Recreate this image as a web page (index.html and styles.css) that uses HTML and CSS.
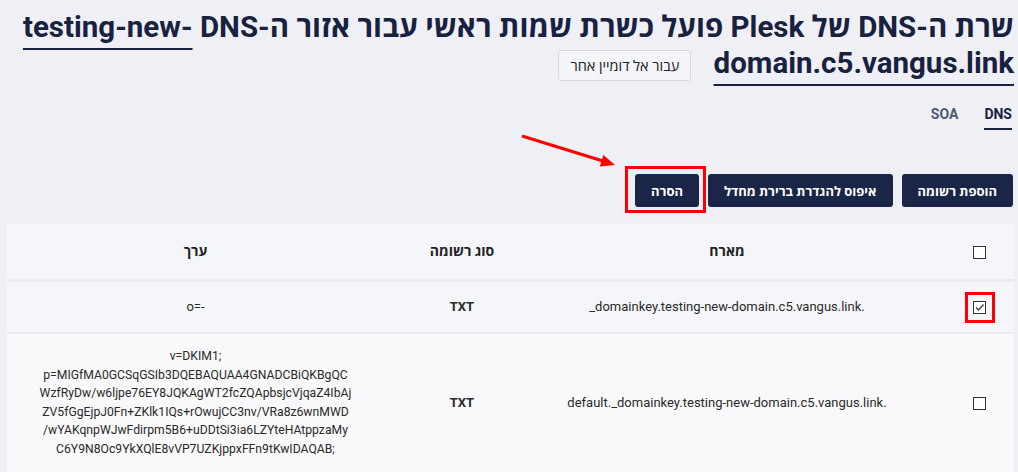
FILE: index.html
```
<!DOCTYPE html>
<html lang="he" dir="rtl">
<head>
    <meta charset="UTF-8">
    <meta name="viewport" content="width=device-width, initial-scale=1.0">
    <title>DNS - testing-new-domain.c5.vangus.link</title>
    <link rel="stylesheet" href="styles.css">
</head>
<body>
<div class="page">
    <h1 class="title">
        שרת ה-DNS של Plesk פועל כשרת שמות ראשי עבור אזור ה-DNS
        <a class="zone-link" href="#" dir="ltr">testing-new-domain.c5.vangus.link</a>
        <button class="btn-light">עבור אל דומיין אחר</button>
    </h1>

    <ul class="tabs">
        <li><a class="tab active" href="#">DNS</a></li>
        <li><a class="tab" href="#">SOA</a></li>
    </ul>

    <div class="toolbar">
        <button class="btn">הוספת רשומה</button>
        <button class="btn">איפוס להגדרת ברירת מחדל</button>
        <span class="marked"><button class="btn">הסרה</button></span>
    </div>

    <!-- annotation arrow -->
    <svg class="arrow" width="110" height="45" viewBox="0 0 110 45">
        <line x1="7" y1="6" x2="88" y2="31" stroke="#f00" stroke-width="3"/>
        <polygon points="100,35 84.8,36.5 88.4,25.1" fill="#f00"/>
    </svg>

    <table class="records">
        <colgroup>
            <col style="width:70px">
            <col style="width:434px">
            <col style="width:96px">
            <col>
        </colgroup>
        <thead>
            <tr>
                <th><span class="check"></span></th>
                <th>מארח</th>
                <th>סוג רשומה</th>
                <th class="value-col">ערך</th>
            </tr>
        </thead>
        <tbody>
            <tr class="row-a">
                <td>
                    <span class="marked small">
                        <span class="check">
                            <svg width="11" height="11" viewBox="0 0 11 11"><path d="M2 5.5 L4.5 8 L9.5 2.5" fill="none" stroke="#444" stroke-width="1.4"/></svg>
                        </span>
                    </span>
                </td>
                <td class="ltr">_domainkey.testing-new-domain.c5.vangus.link.</td>
                <td class="type">TXT</td>
                <td class="ltr value-col">o=-</td>
            </tr>
            <tr class="row-b">
                <td><span class="check"></span></td>
                <td class="ltr">default._domainkey.testing-new-domain.c5.vangus.link.</td>
                <td class="type">TXT</td>
                <td class="ltr value-col dkim">v=DKIM1;<br>p=MIGfMA0GCSqGSIb3DQEBAQUAA4GNADCBiQKBgQC<br>WzfRyDw/w6ljpe76EY8JQKAgWT2fcZQApbsjcVjqaZ4IbAj<br>ZV5fGgEjpJ0Fn+ZKlk1IQs+rOwujCC3nv/VRa8z6wnMWD<br>/wYAKqnpWJwFdirpm5B6+uDDtSi3ia6LZYteHAtppzaMy<br>C6Y9N8Oc9YkXQlE8vVP7UZKjppxFFn9tKwIDAQAB;</td>
            </tr>
        </tbody>
    </table>
</div>
</body>
</html>
```

FILE: styles.css
```
body {
    margin: 0;
    background-color: #eff0f5;
    font-family: Roboto, "Open Sans", "DejaVu Sans", sans-serif;
    color: #222;
}

.page {
    position: relative;
    padding: 0 4px 0 7px;
}

.title {
    margin: 9px 0 0;
    font-size: 29.5px;
    line-height: 36px;
    font-weight: 700;
    color: #18213f;
}

.zone-link {
    color: #18213f;
    text-decoration: underline;
    text-decoration-thickness: 2px;
    text-underline-offset: 11px;
}

.btn-light {
    height: 31px;
    margin-right: 15px;
    padding: 0 11px;
    vertical-align: middle;
    background-color: #f4f5f9;
    border: 1px solid #d6d8df;
    border-radius: 3px;
    font-family: Roboto, "Open Sans", sans-serif;
    font-size: 14.5px;
    color: #222;
}

.tabs {
    list-style: none;
    margin: 23px 0 0;
    padding: 0 2px 0 0;
    display: flex;
    gap: 26px;
}

.tab {
    display: block;
    padding-bottom: 4px;
    border-bottom: 2px solid transparent;
    font-size: 14px;
    line-height: 20px;
    font-weight: 700;
    color: #4d5873;
    text-decoration: none;
}

.tab.active {
    color: #18213f;
    border-bottom-color: #18213f;
}

.toolbar {
    margin-top: 44px;
    padding-right: 1px;
    display: flex;
    gap: 9px;
}

.btn {
    height: 33px;
    padding: 0 16px;
    background-color: #1a2548;
    color: white;
    border: none;
    border-radius: 3px;
    font-family: Roboto, "Open Sans", sans-serif;
    font-size: 13px;
    font-weight: 700;
}

/* red annotation frames */
.marked {
    position: relative;
    display: inline-block;
}

.marked::after {
    content: "";
    position: absolute;
    top: -8px;
    bottom: -6px;
    left: -10px;
    right: -7px;
    border: 3px solid #f00;
}

.marked.small::after {
    top: -5px;
    bottom: -6px;
    left: -8px;
    right: -9px;
}

.arrow {
    position: absolute;
    left: 515px;
    top: 121px;
}

.records {
    width: 1007px;
    margin-top: 17px;
    border-collapse: separate;
    border-spacing: 0;
    table-layout: fixed;
    font-size: 13px;
}

.records th {
    padding: 18px 6px;
    line-height: 19px;
    font-size: 14px;
    font-weight: 700;
    text-align: center;
    background-color: #f5f6f9;
    border-bottom: 3px solid #ebecf1;
}

.records td {
    padding-left: 6px;
    padding-right: 6px;
    text-align: center;
    line-height: 20px;
    color: #2a2a2a;
}

.records .value-col {
    padding-right: 36px;
}

.row-a td {
    padding-top: 15px;
    padding-bottom: 15px;
    background-color: #f5f6f9;
    border-bottom: 2px solid #ebecf1;
}

.row-b td {
    padding-top: 13px;
    padding-bottom: 13px;
    background-color: #f9f9fb;
}

.records td.ltr {
    unicode-bidi: plaintext;
}

.records td.dkim {
    font-size: 12.2px;
    line-height: 18.6px;
}

.records td.type {
    font-weight: 700;
}

.check {
    display: inline-block;
    width: 11px;
    height: 11px;
    vertical-align: middle;
    border: 1px solid #333;
    background-color: white;
}

.check svg {
    display: block;
}
```
